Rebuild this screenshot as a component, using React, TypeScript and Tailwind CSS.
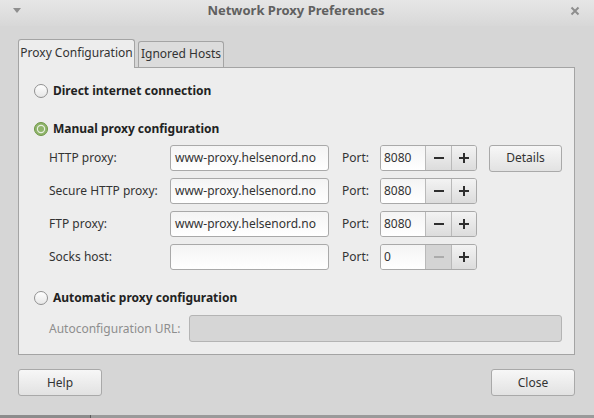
import React from 'react';

const font = { fontFamily: '"Noto Sans", "DejaVu Sans", sans-serif' };

const Radio: React.FC<{ checked?: boolean }> = ({ checked }) =>
  checked ? (
    <svg width="14" height="14" viewBox="0 0 14 14" className="shrink-0">
      <circle cx="7" cy="7" r="6.5" fill="#8fb46a" stroke="#6f9647" />
      <circle cx="7" cy="7" r="4.2" fill="#e8eee2" />
      <circle cx="7" cy="7" r="3" fill="#8fb46a" />
    </svg>
  ) : (
    <svg width="14" height="14" viewBox="0 0 14 14" className="shrink-0">
      <defs>
        <linearGradient id="rg" x1="0" y1="0" x2="0" y2="1">
          <stop offset="0" stopColor="#ffffff" />
          <stop offset="1" stopColor="#e6e6e6" />
        </linearGradient>
      </defs>
      <circle cx="7" cy="7" r="6.5" fill="url(#rg)" stroke="#909090" />
    </svg>
  );

const Minus: React.FC<{ dim?: boolean }> = ({ dim }) => (
  <svg width="12" height="12" viewBox="0 0 12 12">
    <rect x="1" y="5" width="10" height="2" fill={dim ? '#ababab' : '#2e2e2e'} />
  </svg>
);

const Plus = () => (
  <svg width="12" height="12" viewBox="0 0 12 12">
    <rect x="1" y="5" width="10" height="2" fill="#2e2e2e" />
    <rect x="5" y="1" width="2" height="10" fill="#2e2e2e" />
  </svg>
);

const Entry: React.FC<{ value?: string }> = ({ value }) => (
  <div className="w-[159px] shrink-0 h-[26px] rounded-[3px] border border-[#a9a9a9] bg-gradient-to-b from-[#f4f4f4] to-[#ffffff] px-[4px] flex items-center text-[#333]">
    {value}
  </div>
);

const Spin: React.FC<{ value: string; minDisabled?: boolean }> = ({ value, minDisabled }) => (
  <div className="w-[97px] shrink-0 h-[26px] rounded-[3px] border border-[#a9a9a9] flex overflow-hidden">
    <div className="w-[44px] bg-gradient-to-b from-[#f4f4f4] to-[#ffffff] px-[3px] flex items-center text-[#333]">{value}</div>
    <div
      className={
        minDisabled
          ? 'w-[26px] border-l border-[#b9b9b9] bg-[#d4d4d4] flex items-center justify-center'
          : 'w-[26px] border-l border-[#b9b9b9] bg-gradient-to-b from-[#f3f3f3] to-[#dcdcdc] flex items-center justify-center'
      }
    >
      <Minus dim={minDisabled} />
    </div>
    <div className="flex-1 border-l border-[#b9b9b9] bg-gradient-to-b from-[#f3f3f3] to-[#dcdcdc] flex items-center justify-center">
      <Plus />
    </div>
  </div>
);

const Button: React.FC<{ label: string; w: string }> = ({ label, w }) => (
  <div
    className={`${w} shrink-0 h-[27px] rounded-[3px] border border-[#a9a9a9] bg-gradient-to-b from-[#f7f7f7] to-[#e2e2e2] flex items-center justify-center text-[#333]`}
  >
    {label}
  </div>
);

const rows = [
  { label: 'HTTP proxy:', host: 'www-proxy.helsenord.no', port: '8080', details: true },
  { label: 'Secure HTTP proxy:', host: 'www-proxy.helsenord.no', port: '8080' },
  { label: 'FTP proxy:', host: 'www-proxy.helsenord.no', port: '8080' },
  { label: 'Socks host:', host: '', port: '0', minDisabled: true },
];

export default function App() {
  return (
    <div className="w-[594px] h-[418px] bg-[#d6d6d6] flex flex-col text-[12px] text-[#333] overflow-hidden" style={font}>
      {/* title bar */}
      <div className="h-[26px] shrink-0 bg-gradient-to-b from-[#e6e6e6] to-[#d8d8d8] flex items-center px-[12px]">
        <svg width="10" height="6" viewBox="0 0 10 6" className="mb-[4px]">
          <path d="M1 0 L9 0 L5 5 Z" fill="#8e8e8e" />
        </svg>
        <div className="flex-1 text-center font-bold text-[13px] text-[#606060] -mt-[4px]">Network Proxy Preferences</div>
        <svg width="10" height="10" viewBox="0 0 10 10" className="mb-[4px] mr-[2px]">
          <path d="M1.5 1.5 L8.5 8.5 M8.5 1.5 L1.5 8.5" stroke="#8e8e8e" strokeWidth="2" />
        </svg>
      </div>

      <div className="flex-1 flex flex-col px-[18px] pr-[19px] pt-[13px]">
        {/* tabs */}
        <div className="flex items-end h-[28px] gap-[3px]">
          <div className="h-[29px] w-[117px] -mb-px relative z-10 rounded-t-[3px] border border-b-0 border-[#a4a4a4] bg-[#ededed] flex items-center justify-center pb-[3px]">
            Proxy Configuration
          </div>
          <div className="h-[26px] w-[86px] rounded-t-[3px] border border-b-0 border-[#a4a4a4] bg-[#dcdcdc] flex items-center justify-center pb-[1px]">
            Ignored Hosts
          </div>
        </div>

        {/* notebook page */}
        <div className="h-[288px] border border-[#a4a4a4] bg-[#ededed] flex flex-col pl-[15px] pr-[12px]">
          <div className="mt-[13px] h-[20px] flex items-center gap-[5px] font-bold text-[#222]">
            <Radio />
            <span>Direct internet connection</span>
          </div>
          <div className="mt-[18px] h-[20px] flex items-center gap-[5px] font-bold text-[#222]">
            <Radio checked />
            <span>Manual proxy configuration</span>
          </div>

          <div className="mt-[6px] flex flex-col gap-[7px] pl-[15px]">
            {rows.map((r) => (
              <div key={r.label} className="h-[26px] flex items-center">
                <div className="w-[121px] shrink-0">{r.label}</div>
                <Entry value={r.host} />
                <div className="w-[51px] shrink-0 pl-[13px]">Port:</div>
                <Spin value={r.port} minDisabled={r.minDisabled} />
                {r.details && (
                  <div className="ml-[12px]">
                    <Button label="Details" w="w-[73px]" />
                  </div>
                )}
              </div>
            ))}
          </div>

          <div className="mt-[18px] h-[20px] flex items-center gap-[5px] font-bold text-[#222]">
            <Radio />
            <span>Automatic proxy configuration</span>
          </div>
          <div className="mt-[7px] h-[27px] flex items-center pl-[15px]">
            <div className="w-[140px] shrink-0 text-[#8e8e8e]">Autoconfiguration URL:</div>
            <div className="w-[373px] shrink-0 h-[27px] rounded-[3px] border border-[#b4b4b4] bg-[#d6d6d6]" />
          </div>
        </div>

        {/* buttons */}
        <div className="mt-[14px] flex justify-between">
          <Button label="Help" w="w-[84px]" />
          <Button label="Close" w="w-[84px]" />
        </div>
      </div>

      <div className="h-[3px] shrink-0 flex">
        <div className="w-[90px] bg-[#8c8c8c]" />
        <div className="w-[1px] bg-[#5c5c5c]" />
        <div className="flex-1 bg-[#9a9a9a]" />
      </div>
    </div>
  );
}
